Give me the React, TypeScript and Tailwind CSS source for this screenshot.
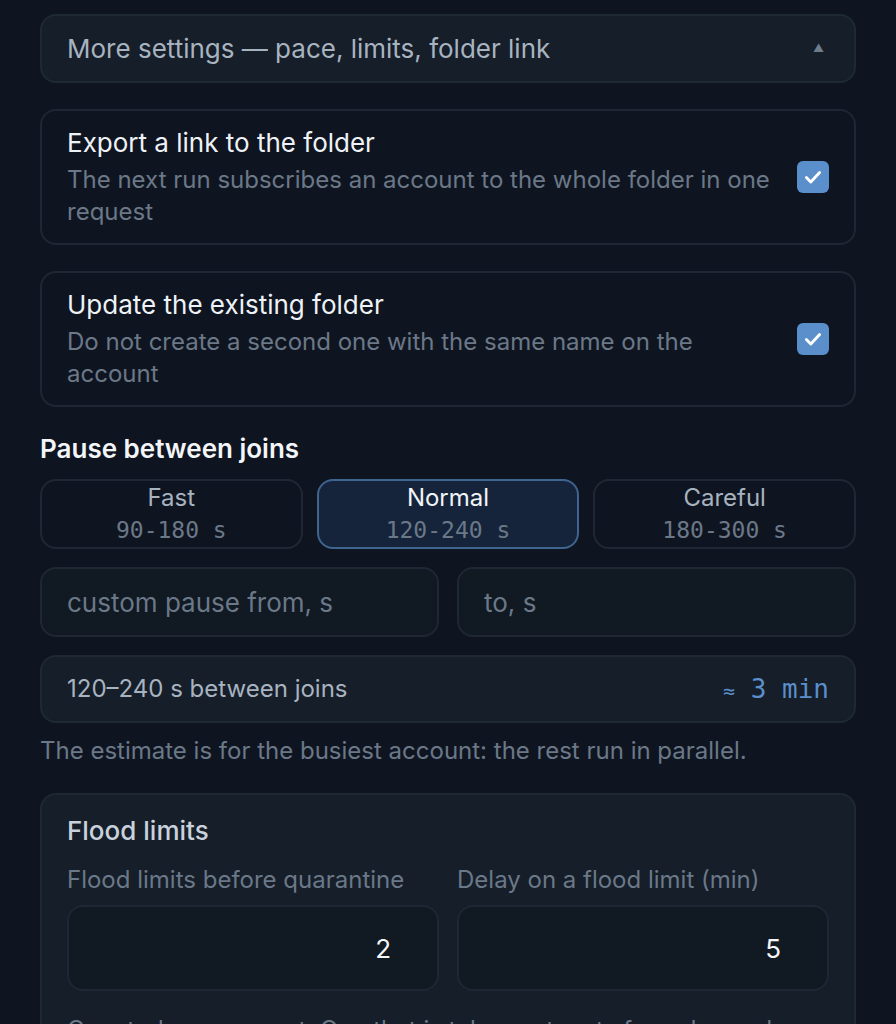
import React, { useState } from 'react';

const mono = "font-['DejaVu_Sans_Mono',monospace]";

interface ToggleRowProps {
  title: string;
  hint: string;
  checked: boolean;
  onChange: (v: boolean) => void;
}

// Card with a title, a hint and a checkbox on the right
const ToggleRow: React.FC<ToggleRowProps> = ({ title, hint, checked, onChange }) => (
  <label className="flex h-[136px] items-center gap-6 rounded-[16px] border-2 border-[#1e2733] px-[25px] cursor-pointer">
    <div className="flex-1">
      <div className="text-[26px] leading-[32px] text-[#eef2f6]">{title}</div>
      <div className="mt-[5px] text-[24px] leading-[32px] text-[#6b7888]">{hint}</div>
    </div>
    <span
      className={`flex h-[32px] w-[32px] shrink-0 items-center justify-center rounded-[6px] ${
        checked ? 'bg-[#5b8fcb]' : 'border-2 border-[#3a4656]'
      }`}
      onClick={(e) => {
        e.preventDefault();
        onChange(!checked);
      }}
    >
      {checked && (
        <svg width="22" height="22" viewBox="0 0 20 20" fill="none">
          <path d="M4 10.5l4 4 8-8.5" stroke="#fff" strokeWidth="2.6" strokeLinecap="round" strokeLinejoin="round" />
        </svg>
      )}
    </span>
  </label>
);

const presets = [
  { name: 'Fast', range: '90-180 s' },
  { name: 'Normal', range: '120-240 s' },
  { name: 'Careful', range: '180-300 s' },
];

const fieldCls =
  'h-[70px] w-full rounded-[16px] border-2 border-[#1e2733] bg-[#111923] px-[25px] text-[26px] text-[#e6ebf0] outline-none placeholder:text-[#6b7888]';

export default function App() {
  const [exportLink, setExportLink] = useState(true);
  const [updateFolder, setUpdateFolder] = useState(true);
  const [pace, setPace] = useState('Normal');

  return (
    <div className="min-h-screen bg-[#0f1520] px-[40px] pt-[14px] font-['Inter',sans-serif]">
      {/* Collapsible header */}
      <div className="flex h-[69px] items-center justify-between rounded-[16px] border-2 border-[#1f2934] bg-[#151e29] pl-[25px] pr-[30px]">
        <span className="text-[26px] text-[#a8b3c0]">More settings — pace, limits, folder link</span>
        <span className="text-[11px] text-[#6f7c8c]">▲</span>
      </div>

      <div className="mt-[26px] flex flex-col gap-[26px]">
        <ToggleRow
          title="Export a link to the folder"
          hint="The next run subscribes an account to the whole folder in one request"
          checked={exportLink}
          onChange={setExportLink}
        />
        <ToggleRow
          title="Update the existing folder"
          hint="Do not create a second one with the same name on the account"
          checked={updateFolder}
          onChange={setUpdateFolder}
        />
      </div>

      <div className="mt-[24px] text-[26px] font-semibold leading-[36px] text-[#f3f5f8]">Pause between joins</div>

      {/* Pace presets */}
      <div className="mt-[12px] grid grid-cols-3 gap-[14px]">
        {presets.map((p) => {
          const active = p.name === pace;
          return (
            <button
              key={p.name}
              onClick={() => setPace(p.name)}
              className={`flex h-[70px] flex-col items-center justify-center rounded-[16px] border-2 ${
                active ? 'border-[#3d6590] bg-[#15243a]' : 'border-[#1f2834] bg-transparent'
              }`}
            >
              <span className={`text-[24px] leading-[32px] ${active ? 'text-[#f1f4f8]' : 'text-[#a8b3c0]'}`}>{p.name}</span>
              <span className={`${mono} text-[23px] leading-[32px] text-[#6b7888]`}>{p.range}</span>
            </button>
          );
        })}
      </div>

      {/* Custom pause range */}
      <div className="mt-[18px] grid grid-cols-2 gap-[18px]">
        <input placeholder="custom pause from, s" className={fieldCls} />
        <input placeholder="to, s" className={fieldCls} />
      </div>

      {/* Estimate */}
      <div className="mt-[18px] flex h-[68px] items-center justify-between rounded-[16px] border-2 border-[#1f2934] bg-[#151e29] px-[25px]">
        <span className="text-[24px] text-[#a8b3c0]">120–240 s between joins</span>
        <span className={`${mono} text-[26px] text-[#5b8fcb]`}>
          <span className="text-[20px]">≈</span> 3 min
        </span>
      </div>
      <p className="mt-[12px] text-[24px] leading-[32px] text-[#6b7888]">
        The estimate is for the busiest account: the rest run in parallel.
      </p>

      {/* Flood limits */}
      <div className="mt-[26px] rounded-t-[16px] border-2 border-b-0 border-[#1f2934] bg-[#151e29] px-[25px] pt-[19px] pb-[30px]">
        <div className="text-[26px] font-medium leading-[34px] text-[#c9d2dc]">Flood limits</div>
        <div className="mt-[16px] grid grid-cols-2 gap-[18px]">
          {[
            { label: 'Flood limits before quarantine', value: '2' },
            { label: 'Delay on a flood limit (min)', value: '5' },
          ].map((f) => (
            <div key={f.label} className="flex flex-col">
              <span className="text-[24px] leading-[32px] text-[#6b7888]">{f.label}</span>
              <input
                defaultValue={f.value}
                className="mt-[9px] h-[86px] rounded-[16px] border-2 border-[#1e2733] bg-[#111923] pr-[46px] text-right text-[26px] text-[#f3f5f8] outline-none"
              />
            </div>
          ))}
        </div>
        <p className="mt-[23px] text-[24px] leading-[32px] text-[#6b7888]">
          Counted per account. One that is taken out rests for a day and then comes back on its own.
        </p>
      </div>
    </div>
  );
}
